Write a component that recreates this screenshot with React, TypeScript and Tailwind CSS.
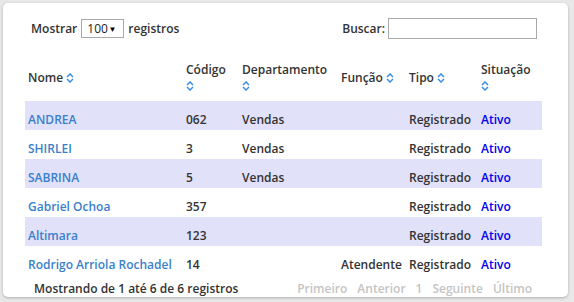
import React from "react";

const rows = [
  { nome: "ANDREA", codigo: "062", dep: "Vendas", funcao: "", tipo: "Registrado", sit: "Ativo" },
  { nome: "SHIRLEI", codigo: "3", dep: "Vendas", funcao: "", tipo: "Registrado", sit: "Ativo" },
  { nome: "SABRINA", codigo: "5", dep: "Vendas", funcao: "", tipo: "Registrado", sit: "Ativo" },
  { nome: "Gabriel Ochoa", codigo: "357", dep: "", funcao: "", tipo: "Registrado", sit: "Ativo" },
  { nome: "Altimara", codigo: "123", dep: "", funcao: "", tipo: "Registrado", sit: "Ativo" },
  { nome: "Rodrigo Arriola Rochadel", codigo: "14", dep: "", funcao: "Atendente", tipo: "Registrado", sit: "Ativo" },
];

function SortIcon() {
  return (
    <svg width="8" height="10" viewBox="0 0 8 10" className="inline-block align-[-1px]">
      <path d="M1 4 L4 1 L7 4" fill="none" stroke="#3b8ee6" strokeWidth="1.5" />
      <path d="M1 6 L4 9 L7 6" fill="none" stroke="#3b8ee6" strokeWidth="1.5" />
    </svg>
  );
}

export default function App() {
  return (
    <div
      className="w-[574px] h-[302px] bg-[#e8e8e8] pt-[3px] pl-[3px] overflow-hidden text-[#333] text-[12px] font-semibold"
      style={{ fontFamily: '"Open Sans", "Noto Sans", sans-serif' }}
    >
      <div className="w-[565px] h-[294px] bg-white rounded-[5px] shadow-[0_1px_3px_rgba(0,0,0,0.25)] flex flex-col">
        {/* ── Controls ── */}
        <div className="flex items-center justify-between pl-[28px] pr-[31px] pt-[15px]">
          <div className="flex items-center gap-[4px]">
            <span>Mostrar</span>
            <div className="w-[43px] h-[19px] border border-[#a9a9a9] flex items-center justify-between pl-[5px] pr-[7px] font-normal text-[12px]">
              <span className="text-[#222]">100</span>
              <span className="text-[8px] text-black">▼</span>
            </div>
            <span>registros</span>
          </div>
          <div className="flex items-center gap-[3px]">
            <span>Buscar:</span>
            <div className="w-[149px] h-[21px] border border-[#a9a9a9]" />
          </div>
        </div>

        {/* ── Table ── */}
        <table className="ml-[22px] mt-[14px] w-[517px] table-fixed border-collapse">
          <colgroup>
            <col className="w-[158px]" />
            <col className="w-[56px]" />
            <col className="w-[99px]" />
            <col className="w-[68px]" />
            <col className="w-[72px]" />
            <col className="w-[64px]" />
          </colgroup>
          <thead>
            <tr className="h-[48px] text-left">
              <th className="pl-[3px] pt-[2px] font-semibold align-middle leading-[16px]">
                Nome <SortIcon />
              </th>
              <th className="pl-[3px] pt-[2px] font-semibold align-middle leading-[16px]">
                Código
                <br />
                <SortIcon />
              </th>
              <th className="pl-[3px] pt-[2px] font-semibold align-middle leading-[16px]">
                Departamento
                <br />
                <SortIcon />
              </th>
              <th className="pl-[3px] pt-[2px] font-semibold align-middle leading-[16px]">
                Função <SortIcon />
              </th>
              <th className="pl-[3px] pt-[2px] font-semibold align-middle leading-[16px]">
                Tipo <SortIcon />
              </th>
              <th className="pl-[3px] pt-[2px] font-semibold align-middle leading-[16px]">
                Situação
                <br />
                <SortIcon />
              </th>
            </tr>
          </thead>
          <tbody>
            {rows.map((r, i) => (
              <tr key={r.nome} className={i % 2 === 0 ? "h-[29px] bg-[#e1e1fa]" : "h-[29px]"}>
                <td className="pl-[3px] pt-[8px] text-[#3a7fcb] whitespace-nowrap">{r.nome}</td>
                <td className="pl-[3px] pt-[8px]">{r.codigo}</td>
                <td className="pl-[3px] pt-[8px]">{r.dep}</td>
                <td className="pl-[3px] pt-[8px] whitespace-nowrap">{r.funcao}</td>
                <td className="pl-[3px] pt-[8px] whitespace-nowrap">{r.tipo}</td>
                <td className="pl-[3px] pt-[8px] text-[#0000ee]">{r.sit}</td>
              </tr>
            ))}
          </tbody>
        </table>

        {/* ── Footer ── */}
        <div className="flex items-center justify-between pl-[31px] pr-[36px] pt-[5px]">
          <span>Mostrando de 1 até 6 de 6 registros</span>
          <div className="flex items-center gap-[10px] text-[#c4c4c4]">
            <span>Primeiro</span>
            <span>Anterior</span>
            <span>1</span>
            <span>Seguinte</span>
            <span>Último</span>
          </div>
        </div>
      </div>
    </div>
  );
}
